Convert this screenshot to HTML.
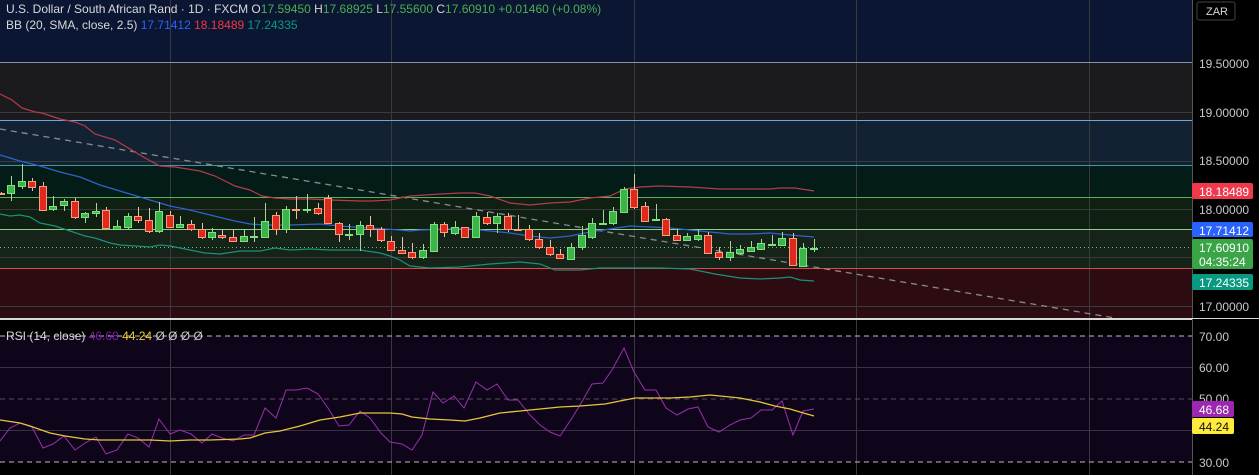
<!DOCTYPE html>
<html><head><meta charset="utf-8"><style>
html,body{margin:0;padding:0;background:#000;width:1259px;height:475px;overflow:hidden}
svg{display:block;font-family:"Liberation Sans",sans-serif}
</style></head><body>
<svg width="1259" height="475" viewBox="0 0 1259 475" xmlns="http://www.w3.org/2000/svg">
<!-- main pane zones -->
<rect x="0" y="0" width="1192" height="63" fill="#0b1633"/>
<rect x="0" y="63" width="1192" height="58" fill="#1b1b1e"/>
<rect x="0" y="121" width="1192" height="45" fill="#132233"/>
<rect x="0" y="166" width="1192" height="31" fill="#031c17"/>
<rect x="0" y="197" width="1192" height="32" fill="#0f1f12"/>
<rect x="0" y="229" width="1192" height="39" fill="#162318"/>
<rect x="0" y="268" width="1192" height="50" fill="#2c0c10"/>
<!-- grid -->
<g stroke="#3a3a3e" stroke-width="1">
<line x1="0" y1="112.5" x2="1192" y2="112.5"/><line x1="0" y1="161.5" x2="1192" y2="161.5"/>
<line x1="0" y1="209.5" x2="1192" y2="209.5"/><line x1="0" y1="257.5" x2="1192" y2="257.5"/>
<line x1="0" y1="306.5" x2="1192" y2="306.5"/>
<line x1="170.5" y1="0" x2="170.5" y2="475"/><line x1="391.5" y1="0" x2="391.5" y2="475"/>
<line x1="634.5" y1="0" x2="634.5" y2="475"/><line x1="856.5" y1="0" x2="856.5" y2="475"/>
<line x1="1089.5" y1="0" x2="1089.5" y2="475"/>
</g>
<!-- zone lines -->
<line x1="0" y1="62.5" x2="1192" y2="62.5" stroke="#8a90a8"/>
<line x1="0" y1="120.5" x2="1192" y2="120.5" stroke="#6fa6dc"/>
<line x1="0" y1="165.5" x2="1192" y2="165.5" stroke="#3f9a9a"/>
<line x1="0" y1="197.5" x2="1192" y2="197.5" stroke="#5fae5a"/>
<line x1="0" y1="229.5" x2="1192" y2="229.5" stroke="#8ed08a"/>
<line x1="0" y1="268.5" x2="1192" y2="268.5" stroke="#d84a4a"/>
<!-- trend dashed -->
<line x1="0" y1="129" x2="1115" y2="318" stroke="#8a8a90" stroke-width="1.3" stroke-dasharray="6,5"/>
<!-- current price dotted -->
<line x1="0" y1="247.5" x2="1192" y2="247.5" stroke="#5fc07a" stroke-dasharray="1,3"/>
<!-- BB -->
<polyline fill="none" stroke="#b53b4c" stroke-width="1.2" points="0,94 12,100 22,108 35,112 42,113 60,119 75,122 85,126 95,134 115,140 130,149 145,158 160,166 175,167 200,171 215,176 235,186 250,190 262,196 275,198 290,199 310,199 330,200 360,201 372,201 390,200 400,198 410,196 440,194 460,193 475,193 490,196 510,203 530,205 550,203 570,202 590,198 610,196 625,189 640,187 660,186 690,187 720,189 750,189 770,189 780,188 795,188 814,191"/>
<polyline fill="none" stroke="#2d63d0" stroke-width="1.3" points="0,155 20,161 40,166 60,172 80,177 100,185 130,194 150,200 170,206 190,210 210,215 235,221 250,224 265,225 290,225 320,224 340,226 370,228 400,230 410,231 420,230 450,229 470,229 490,231 510,233 530,236 550,238 570,236 590,232 610,229 630,226 650,227 670,228 690,230 710,232 730,234 750,234 770,233 790,235 814,237"/>
<polyline fill="none" stroke="#1d8f7a" stroke-width="1.2" points="0,214 10,216 20,215 30,217 40,223 55,226 70,231 85,236 95,238 110,243 120,245 135,246 150,247 160,245 170,246 190,250 205,253 220,254 240,251 260,251 275,248 290,250 310,249 330,250 360,250 380,253 390,256 400,260 410,266 430,268 460,267 490,264 520,262 540,264 555,270 580,270 600,268 630,268 660,268 690,269 715,274 740,278 760,279 780,278 790,277 800,280 814,281"/>
<!-- candles -->
<g id="c" stroke-width="1"></g>
<!-- separator -->
<rect x="0" y="318" width="1192" height="2" fill="#d8d8d8"/>
<!-- RSI pane -->
<rect x="0" y="320" width="1192" height="155" fill="#000"/>
<rect x="0" y="336" width="1192" height="126" fill="#0f051b"/>
<g stroke="#3a3a3e"><line x1="170.5" y1="320" x2="170.5" y2="475"/><line x1="391.5" y1="320" x2="391.5" y2="475"/><line x1="634.5" y1="320" x2="634.5" y2="475"/><line x1="856.5" y1="320" x2="856.5" y2="475"/><line x1="1089.5" y1="320" x2="1089.5" y2="475"/></g>
<line x1="0" y1="367.5" x2="1192" y2="367.5" stroke="#3c3046"/>
<line x1="0" y1="430.5" x2="1192" y2="430.5" stroke="#3c3046"/>
<g stroke="#bdbdc4" stroke-dasharray="5,4"><line x1="0" y1="336" x2="1192" y2="336"/><line x1="0" y1="462" x2="1192" y2="462"/></g>
<line x1="0" y1="399" x2="1192" y2="399" stroke="#5a4c62" stroke-dasharray="5,4"/>
<polyline fill="none" stroke="#9b2fae" stroke-width="1" points="0,441 10,428 20,423 32,427 43,448 53,444 64,436 75,450 85,443 96,437 106,454 117,450 128,434 138,438 149,447 159,419 170,434 180,430 191,434 202,443 212,434 222,438 233,441 244,435 254,435 265,408 276,418 286,390 296,390 307,388 318,394 328,408 339,426 349,425 360,411 370,418 381,433 390,442 402,444 412,450 422,435 433,392 443,403 454,396 464,408 476,382 487,390 497,384 508,400 518,400 530,415 540,425 550,432 560,436 572,418 580,405 592,384 603,383 612,370 624,348 634,372 645,390 656,390 666,408 677,415 688,409 698,407 708,427 719,432 730,425 740,420 751,418 761,410 772,410 782,401 793,435 803,411 814,409"/>
<polyline fill="none" stroke="#e3c73a" stroke-width="1.3" points="0,420 20,423 30,426 50,433 65,436 85,439 100,440 120,440 150,440 170,441 190,440 210,440 240,439 250,438 265,433 280,431 300,426 320,420 340,417 360,413 390,413 402,414 412,417 430,419 450,420 465,421 480,418 500,413 520,411 540,409 560,407 580,406 605,404 620,401 635,398 650,398 670,398 690,397 710,395 720,396 740,398 760,402 775,406 790,409 800,412 814,416"/>
<!-- axis -->
<rect x="1192" y="0" width="67" height="475" fill="#000"/>
<line x1="1192.5" y1="0" x2="1192.5" y2="475" stroke="#555"/>
<line x1="1192" y1="318.5" x2="1259" y2="318.5" stroke="#d8d8d8"/>
<rect x="1197" y="2" width="38" height="18" rx="2" fill="#000" stroke="#444"/>
<text x="1206" y="15" font-size="11" fill="#d8d8d8">ZAR</text>
<g font-size="12" fill="#c8c8cc">
<text x="1199" y="68">19.50000</text><text x="1199" y="117">19.00000</text><text x="1199" y="165">18.50000</text><text x="1199" y="214">18.00000</text><text x="1199" y="311">17.00000</text>
<text x="1199" y="341">70.00</text><text x="1199" y="372">60.00</text><text x="1199" y="403">50.00</text><text x="1199" y="467">30.00</text>
</g>
<rect x="1192" y="183" width="61" height="16" rx="2" fill="#ee3a4c"/>
<rect x="1192" y="222" width="61" height="15" rx="2" fill="#2962ff"/>
<rect x="1192" y="239" width="61" height="30" rx="2" fill="#3aa547"/>
<rect x="1192" y="274" width="61" height="16" rx="2" fill="#089981"/>
<rect x="1192" y="401" width="42" height="16" rx="2" fill="#9c27b0"/>
<rect x="1192" y="418" width="42" height="16" rx="2" fill="#ffeb3b"/>
<g font-size="12" fill="#fff">
<text x="1199" y="196">18.18489</text><text x="1199" y="235">17.71412</text><text x="1199" y="252">17.60910</text><text x="1199" y="266">04:35:24</text><text x="1199" y="287">17.24335</text><text x="1199" y="414">46.68</text>
</g>
<text x="1199" y="431" font-size="12" fill="#111">44.24</text>
<!-- header -->
<g font-size="12">
<text x="6" y="13" fill="#d8d8d8">U.S. Dollar / South African Rand · 1D · FXCM  <tspan fill="#d8d8d8">O</tspan><tspan fill="#4caf50">17.59450</tspan> <tspan fill="#d8d8d8">H</tspan><tspan fill="#4caf50">17.68925</tspan> <tspan fill="#d8d8d8">L</tspan><tspan fill="#4caf50">17.55600</tspan> <tspan fill="#d8d8d8">C</tspan><tspan fill="#4caf50">17.60910 +0.01460 (+0.08%)</tspan></text>
<text x="6" y="29" fill="#d8d8d8">BB (20, SMA, close, 2.5) <tspan fill="#2962ff">17.71412</tspan> <tspan fill="#f23645">18.18489</tspan> <tspan fill="#089981">17.24335</tspan></text>
<text x="6" y="340" fill="#d8d8d8">RSI (14, close) <tspan fill="#7b1fa2">46.68</tspan> <tspan fill="#e8d23a">44.24</tspan> <tspan fill="#ccc">Ø  Ø  Ø  Ø</tspan></text>
</g>
</svg>
<script>
var d=[[1,193,193,192,195,0],[11,185,193,176,201,1],[22,181,186,164,189,1],[32,181,187,178,191,0],[43,186,210,182,211,0],[53,206,209,196,211,1],[64,201,205,199,211,1],[75,201,217,198,219,0],[85,213,217,212,223,1],[96,211,213,203,217,1],[106,210,228,207,229,0],[117,226,229,220,229,1],[128,216,227,213,229,1],[138,216,220,207,223,0],[149,220,231,208,233,0],[159,211,231,202,233,1],[170,215,227,211,228,0],[180,224,227,216,228,1],[191,224,229,220,231,0],[202,229,237,223,239,0],[212,232,237,228,240,1],[222,235,237,230,239,0],[233,237,241,230,241,0],[244,236,241,230,242,1],[254,236,236,217,242,1],[265,221,237,203,237,1],[276,215,229,212,235,0],[286,209,229,206,233,1],[296,209,209,196,219,0],[307,209,209,194,213,1],[318,208,213,203,215,0],[328,198,223,195,224,0],[339,223,234,222,242,0],[349,234,234,224,240,1],[360,225,234,221,251,1],[370,225,229,216,237,0],[381,229,240,227,242,0],[391,241,250,236,251,0],[402,250,253,237,253,0],[412,252,257,243,259,0],[423,250,257,244,259,1],[434,224,251,222,252,1],[444,224,232,222,237,0],[455,227,233,221,235,1],[465,227,237,227,238,0],[476,216,237,212,238,1],[487,217,223,212,225,0],[497,216,223,213,233,1],[508,216,229,213,232,0],[518,229,229,215,231,0],[529,229,239,225,241,0],[539,239,247,233,249,0],[550,247,254,240,256,0],[560,254,258,249,259,0],[571,247,259,243,259,1],[582,235,247,226,250,1],[592,223,237,218,239,1],[603,223,223,210,225,1],[613,211,223,207,225,1],[624,189,212,187,213,1],[634,189,207,174,209,0],[645,206,221,202,221,0],[656,219,219,204,221,1],[666,219,235,218,236,0],[677,235,240,229,241,0],[687,236,240,233,241,1],[698,235,239,229,241,1],[708,235,253,232,253,0],[719,252,257,247,260,0],[730,252,257,241,261,1],[740,249,253,245,255,1],[751,247,251,241,252,1],[761,243,249,239,250,1],[772,244,244,235,245,1],[782,238,245,232,245,1],[793,238,265,233,266,0],[803,248,266,243,267,1],[814,248,248,239,252,1]];
var g=document.getElementById('c'),s='';
d.forEach(function(c){var x=c[0],up=c[5],f=up?'#3bb54a':'#e0291e',st=up?'#7fe07f':'#f5a07a',wk=up?'#9fd89f':'#e8c0b0';
s+='<line x1="'+(x+.5)+'" y1="'+c[3]+'" x2="'+(x+.5)+'" y2="'+c[4]+'" stroke="'+wk+'"/>';
var h=Math.max(1,c[2]-c[1]);s+='<rect x="'+(x-3.5)+'" y="'+(c[1]+.5)+'" width="7" height="'+h+'" fill="'+f+'" stroke="'+st+'"/>';});
g.innerHTML=s;
</script>
</body></html>
